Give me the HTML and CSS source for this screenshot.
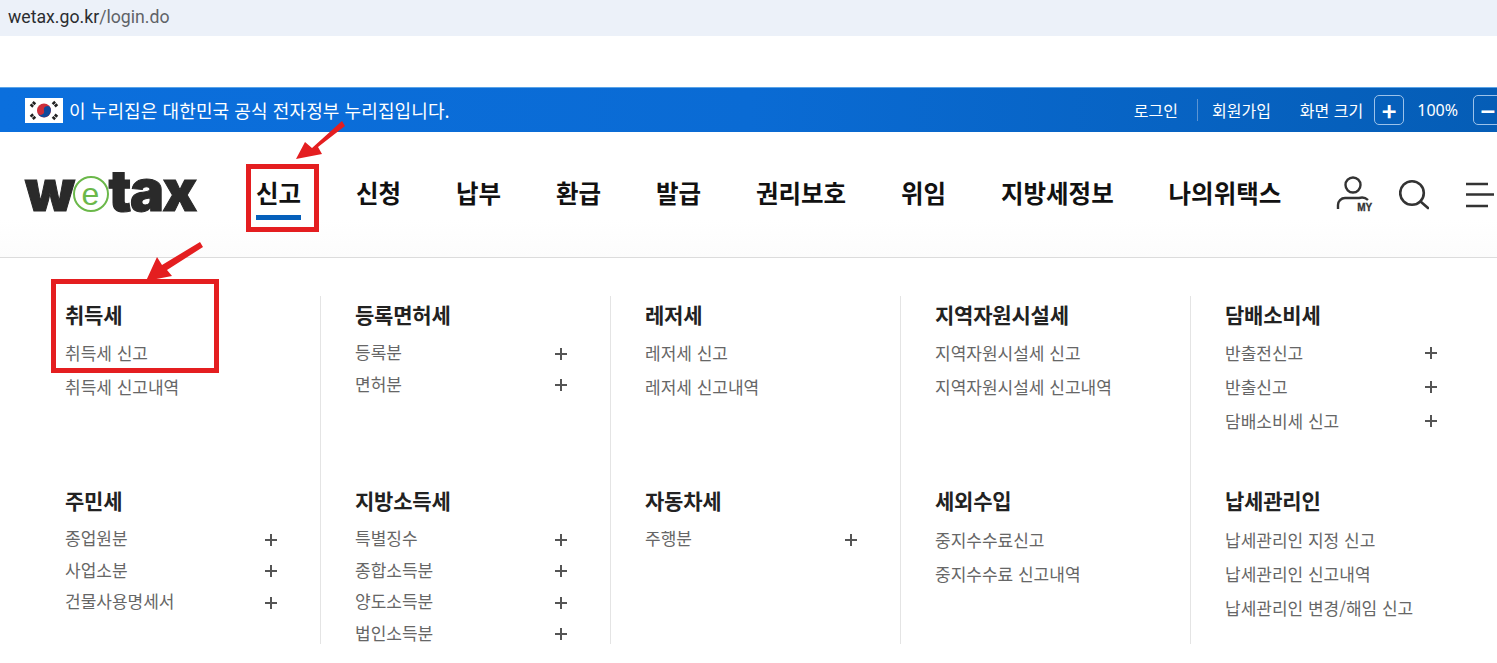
FILE: index.html
```html
<!DOCTYPE html>
<html lang="ko">
<head>
<meta charset="utf-8">
<title>wetax</title>
<link rel="stylesheet" href="styles.css">
</head>
<body>
<div class="page">
  <div class="urlbar"><span class="host">wetax.go.kr</span><span class="path">/login.do</span></div>
  <div class="gap"></div>
  <div class="gov">
    <svg class="flag" width="38" height="25" viewBox="0 0 38 25">
      <rect width="38" height="25" fill="#fff"/>
      <circle cx="19" cy="12.5" r="7" fill="#cd2e3a"/>
      <path d="M12.3 14.5a7 7 0 0 0 13.4 -4a3.5 3.5 0 0 0 -6.7 2a3.5 3.5 0 0 1 -6.7 2z" fill="#0f4a9c"/>
      <g stroke="#222" stroke-width="3.4" stroke-dasharray="2.6 .7">
        <path d="M6 8.5 10 4M28 4 32 8.500M6 16.500 10 21M28 21 32 16.500"/>
      </g>
    </svg>
    <span class="gov-text">이 누리집은 대한민국 공식 전자정부 누리집입니다.</span>
    <div class="util">
      <a class="login">로그인</a>
      <a class="join">회원가입</a>
      <span class="zoom-label">화면 크기</span>
      <span class="zbtn">+</span>
      <span class="pct">100%</span>
      <span class="zbtn">−</span>
    </div>
  </div>
  <header class="head">
    <div class="logo"><span>w</span><span class="logo-e"><span>e</span></span><span>tax</span></div>
    <nav class="nav">
      <a class="active">신고</a><a>신청</a><a>납부</a><a>환급</a><a>발급</a><a>권리보호</a><a>위임</a><a>지방세정보</a><a>나의위택스</a>
    </nav>
    <div class="tools">
      <span class="my">
        <svg width="36" height="38" viewBox="0 0 36 38" fill="none" stroke="#333" stroke-width="2.4">
          <circle cx="17" cy="9" r="7.500"/>
          <path d="M2 33v-4a7 7 0 0 1 7 -7h14a9 9 0 0 1 9 2"/>
        </svg>
        <b>MY</b>
      </span>
      <svg class="search" width="30" height="32" viewBox="0 0 30 32" fill="none" stroke="#333" stroke-width="2.600">
        <circle cx="13" cy="14" r="11.800"/>
        <path d="M21.500 22.500 29 29" stroke-linecap="round"/>
      </svg>
      <svg class="burger" width="28" height="28" viewBox="0 0 28 28" stroke="#333" stroke-width="2.400">
        <path d="M0 3H22M0 13.500H28M0 25H22"/>
      </svg>
    </div>
  </header>
  <main class="menu">
    <section class="col">
      <h3>취득세</h3>
      <ul class="list"><li>취득세 신고</li><li>취득세 신고내역</li></ul>
    </section>
    <section class="col">
      <h3>등록면허세</h3>
      <ul class="list plus"><li>등록분</li><li>면허분</li></ul>
    </section>
    <section class="col">
      <h3>레저세</h3>
      <ul class="list"><li>레저세 신고</li><li>레저세 신고내역</li></ul>
    </section>
    <section class="col">
      <h3>지역자원시설세</h3>
      <ul class="list"><li>지역자원시설세 신고</li><li>지역자원시설세 신고내역</li></ul>
    </section>
    <section class="col">
      <h3>담배소비세</h3>
      <ul class="list plus wide"><li>반출전신고</li><li>반출신고</li><li>담배소비세 신고</li></ul>
    </section>
    <section class="col">
      <h3>주민세</h3>
      <ul class="list plus"><li>종업원분</li><li>사업소분</li><li>건물사용명세서</li></ul>
    </section>
    <section class="col">
      <h3>지방소득세</h3>
      <ul class="list plus"><li>특별징수</li><li>종합소득분</li><li>양도소득분</li><li>법인소득분</li></ul>
    </section>
    <section class="col">
      <h3>자동차세</h3>
      <ul class="list plus"><li>주행분</li></ul>
    </section>
    <section class="col">
      <h3>세외수입</h3>
      <ul class="list low"><li>중지수수료신고</li><li>중지수수료 신고내역</li></ul>
    </section>
    <section class="col">
      <h3>납세관리인</h3>
      <ul class="list low"><li>납세관리인 지정 신고</li><li>납세관리인 신고내역</li><li>납세관리인 변경/해임 신고</li></ul>
    </section>
  </main>
  <div class="mark mark-nav"></div>
  <div class="mark mark-item"></div>
  <svg class="arrows" width="1497" height="663" viewBox="0 0 1497 663" fill="#e41e20">
    <path d="M342 121 345 126 318 147 322 154 296 159 305 142 312 148z"/>
    <path d="M200 242 203 247 167 270 172 276 146 281 157 257 162 265z"/>
  </svg>
</div>
</body>
</html>
```
FILE: styles.css
```css
* { box-sizing: border-box; }
html, body { margin: 0; padding: 0; background: #fff; overflow: hidden; }
body { font-family: "Noto Sans CJK KR", "Noto Sans", sans-serif; color: #222; }
ul, h3 { margin: 0; padding: 0; }
li { list-style: none; }
.page { position: relative; width: 1497px; height: 663px; overflow: hidden; }

.urlbar { height: 36px; background: #ecf1f9; padding-left: 8px; font: 17.7px/34px Roboto, "Noto Sans", sans-serif; }
.host { color: #2b2d30; }
.path { color: #5f6368; }
.gap { height: 51px; }

.gov { height: 45px; display: flex; align-items: center; padding-left: 25px; color: #fff; background: linear-gradient(90deg, #0b6fdd 0%, #0a6bd4 50%, #055db6 100%); border-top: 1px solid #5aa4e8; }
.flag { flex: none; }
.gov-text { margin-left: 6px; font-size: 18px; letter-spacing: 0.1px; line-height: 45px; }
.util { margin-left: auto; margin-right: -6px; display: flex; align-items: center; font-size: 16px; }
.login { padding-right: 19px; border-right: 1px solid #5b94d3; line-height: 22px; }
.join { margin-left: 14px; }
.zoom-label { margin-left: 29px; }
.zbtn { width: 30px; height: 30px; margin-left: 11px; border: 1px solid #9cc2ea; border-radius: 5px; display: flex; align-items: center; justify-content: center; font-size: 25px; font-weight: 700; line-height: 1; }
.pct { margin-left: 13px; font-size: 16px; font-family: "Noto Sans", sans-serif; }
.pct + .zbtn { margin-left: 15px; }

.head { height: 126px; display: flex; align-items: center; padding-left: 25px; border-bottom: 1px solid #dcdcdc; background: linear-gradient(#fff 70%, #fcfcfc); }
.logo { width: 173px; flex: none; display: flex; align-items: center; font: 900 57px/1 Inter, sans-serif; color: #2a2a2a; letter-spacing: -1.500px; -webkit-text-stroke: 1px #2a2a2a; margin-top: -9px; }
.logo-e { flex: none; width: 36px; height: 36px; margin: 7px 0 0 -1px; border: 2px solid #6bb84a; border-radius: 50%; display: flex; align-items: center; justify-content: center; color: #6bb84a; font: 400 32px/1 "Liberation Sans", sans-serif; letter-spacing: 0; -webkit-text-stroke: 0; }
.nav { margin-left: 58px; display: flex; gap: 54.9px; font-size: 24.5px; font-weight: 700; color: #111; margin-top: -4px; }
.nav a { position: relative; line-height: 36px; white-space: nowrap; }
.nav .active::after { content: ""; position: absolute; left: 0; right: 0; top: 40px; height: 5px; background: #0560bb; }
.tools { margin-left: 55px; display: flex; align-items: center; }
.my { position: relative; display: block; width: 36px; height: 38px; flex: none; }
.my svg { display: block; }
.my b { position: absolute; right: 0; bottom: 1px; font: 900 10px/1 "Liberation Sans", sans-serif; color: #333; -webkit-text-stroke: .3px #333; }
.search { margin-left: 27px; flex: none; }
.burger { margin-left: 37px; flex: none; }

.menu { height: 386px; overflow: hidden; display: grid; grid-template-columns: 290px 290px 290px 290px 290px; grid-template-rows: 186px 186px; padding: 38px 0 0 30px; }
.col { padding: 3px 0 0 35px; }
.col + .col { padding-left: 34px; border-left: 1px solid #e4e4e4; }
.col:nth-child(6) { padding-left: 35px; border-left: 0; }
.col h3 { font-size: 21px; line-height: 30px; font-weight: 700; color: #222; letter-spacing: -0.2px; }
.list { margin-top: 7px; font-size: 17px; color: #666; width: 212px; }
.list.low { margin-top: 8px; }
.list li { height: 34px; line-height: 34px; white-space: nowrap; }
.plus li { height: 31.6px; line-height: 32px; position: relative; }
.plus.wide li { height: 34px; line-height: 34px; }
.plus li::after { content: ""; position: absolute; right: 0; top: 11.500px; width: 12px; height: 12px; background: linear-gradient(#555, #555) center/12px 2px no-repeat, linear-gradient(#555, #555) center/2px 12px no-repeat; }
.plus.wide li::after { top: 11px; }

.mark { position: absolute; border: 5px solid #e41e20; }
.mark-nav { left: 246px; top: 164px; width: 73px; height: 68px; }
.mark-item { left: 51px; top: 279px; width: 168px; height: 94px; }
.arrows { position: absolute; left: 0; top: 0; }
```
